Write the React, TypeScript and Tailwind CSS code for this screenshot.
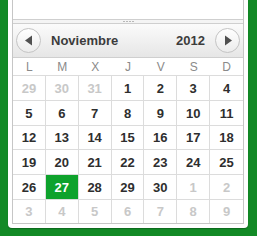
import React from "react";

const rows: { d: number; o: boolean }[][] = [
  [29, 30, 31, 1, 2, 3, 4].map((d, i) => ({ d, o: i < 3 })),
  [5, 6, 7, 8, 9, 10, 11].map((d) => ({ d, o: false })),
  [12, 13, 14, 15, 16, 17, 18].map((d) => ({ d, o: false })),
  [19, 20, 21, 22, 23, 24, 25].map((d) => ({ d, o: false })),
  [26, 27, 28, 29, 30, 1, 2].map((d, i) => ({ d, o: i > 4 })),
  [3, 4, 5, 6, 7, 8, 9].map((d) => ({ d, o: true })),
];
const rowH = ["h-[25px]", "h-[25px]", "h-[24px]", "h-[25px]", "h-[25px]", "h-[24px]"];
const names = ["L", "M", "X", "J", "V", "S", "D"];

function ArrowBtn({ dir }: { dir: "l" | "r" }) {
  return (
    <div className="w-[25px] h-[25px] rounded-full border border-[#c4c4c4] bg-gradient-to-b from-[#ffffff] to-[#ececec] flex items-center justify-center">
      <svg width="10" height="11" viewBox="0 0 10 11">
        {dir === "l" ? (
          <polygon points="8,0.5 8,10.5 1,5.5" fill="#505050" />
        ) : (
          <polygon points="2,0.5 2,10.5 9,5.5" fill="#505050" />
        )}
      </svg>
    </div>
  );
}

export default function App() {
  return (
    <div
      className="w-[257px] h-[236px] bg-[#128a26] pl-[8px] pr-[9px] overflow-hidden"
      style={{ fontFamily: '"Liberation Sans", Arial, sans-serif' }}
    >
      <div className="w-[240px] h-[228px] bg-white rounded-b-[4px] px-[4px] pb-[4px] shadow-[0_1px_1px_rgba(0,0,0,0.25)]">
        <div className="w-[232px] border-l border-r border-b border-[#c6c6c6] bg-white">
          <div className="h-[20px] border-b border-[#cfcfcf]" />
          <div className="h-[4px] border-b border-[#cfcfcf] bg-[#f4f4f4] flex items-center justify-center gap-[1px]">
            {[0, 1, 2, 3].map((i) => (
              <div key={i} className="w-[2px] h-[1px] bg-[#b8b8b8]" />
            ))}
          </div>
          <div className="h-[34px] border-b border-[#cfcfcf] bg-gradient-to-b from-[#fbfbfb] to-[#e6e6e6] flex items-center pl-[3px] pr-[3px]">
            <ArrowBtn dir="l" />
            <div className="ml-[10px] text-[13px] font-bold text-[#3c3c3c] leading-none">Noviembre</div>
            <div className="ml-auto mr-[10px] text-[13px] font-bold text-[#3c3c3c] leading-none">2012</div>
            <ArrowBtn dir="r" />
          </div>
          <div className="grid grid-cols-7 h-[17px]">
            {names.map((n) => (
              <div key={n} className="flex items-center justify-center text-[12px] text-[#8a8a8a] leading-none">
                {n}
              </div>
            ))}
          </div>
          {rows.map((r, ri) => (
            <div key={ri} className={`grid grid-cols-7 ${rowH[ri]}`}>
              {r.map((c, ci) => {
                const sel = ri === 4 && ci === 1;
                return (
                  <div
                    key={ci}
                    className={`flex items-center justify-center border-t border-[#dcdcdc] text-[13px] font-bold leading-none ${
                      ci < 6 ? "border-r" : ""
                    } ${sel ? "bg-[#0ea22c] text-white" : c.o ? "text-[#c8c8c8]" : "text-[#2e2e2e]"}`}
                  >
                    {c.d}
                  </div>
                );
              })}
            </div>
          ))}
        </div>
      </div>
    </div>
  );
}
